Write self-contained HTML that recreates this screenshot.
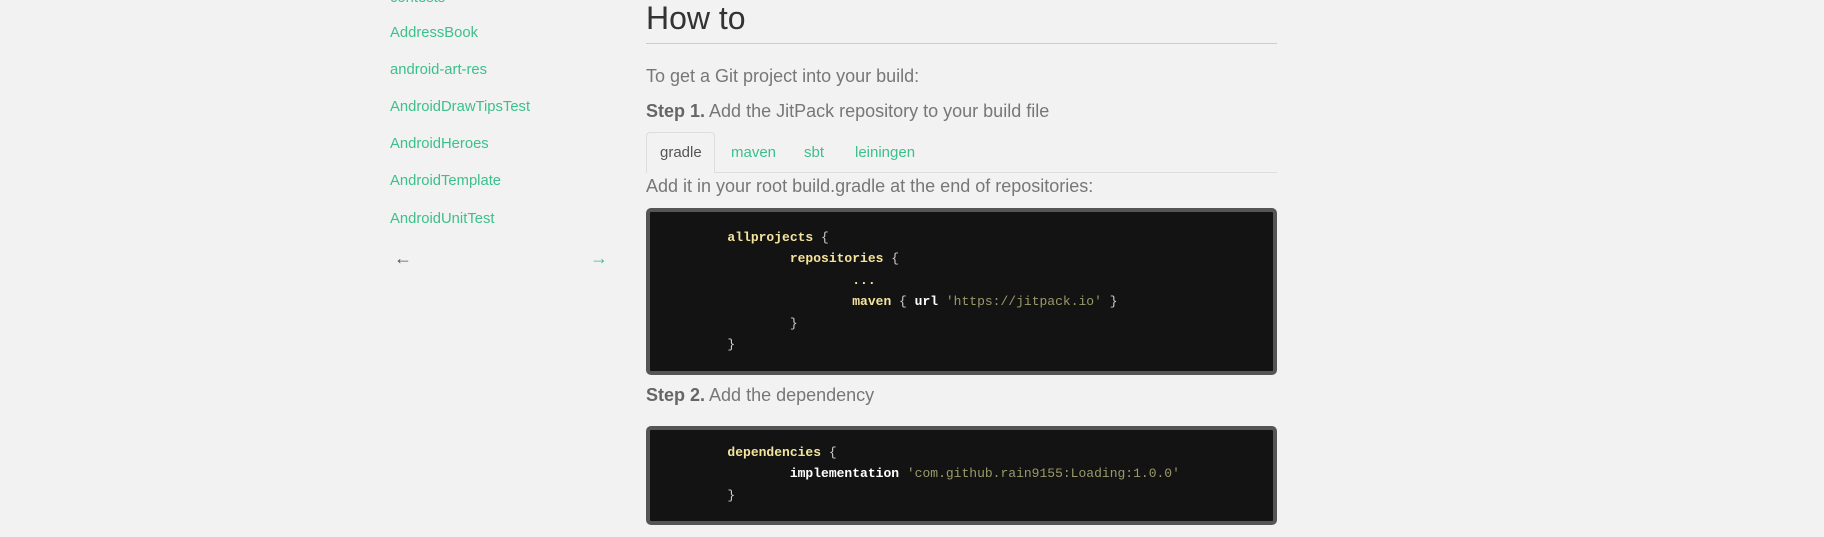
<!DOCTYPE html>
<html><head><meta charset="utf-8"><style>
*{margin:0;padding:0;box-sizing:border-box}
body{width:1824px;height:537px;background:#f2f2f2;font-family:"Liberation Sans",Arial,sans-serif;position:relative;overflow:hidden}
.a{position:absolute;white-space:nowrap}
.l{color:#3cc08c;font-size:14.8px;left:390px}
.t{color:#777;font-size:18px;left:646px}
.t b{color:#666}
pre{position:absolute;left:646px;width:631px;background:#131313;border:4px solid #555;border-radius:5px;font-family:"Liberation Mono","DejaVu Sans Mono",monospace;font-size:13px;line-height:21.6px;color:#ccc;padding-left:15px;tab-size:8;-moz-tab-size:8}
.k{color:#f5e49c;font-weight:bold}
.w{color:#fff;font-weight:bold}
.s{color:#9a9a6a}
</style></head><body>
<div class="a l" style="top:-10px">contests</div>
<div class="a l" style="top:25px">AddressBook</div>
<div class="a l" style="top:62px">android-art-res</div>
<div class="a l" style="top:99px">AndroidDrawTipsTest</div>
<div class="a l" style="top:136px">AndroidHeroes</div>
<div class="a l" style="top:173px">AndroidTemplate</div>
<div class="a l" style="top:211px">AndroidUnitTest</div>
<div class="a" style="left:394px;top:248px;font-size:18px;color:#555">←</div>
<div class="a" style="left:590px;top:248px;font-size:18px;color:#3cc08c">→</div>

<div class="a" style="left:646px;top:0px;font-size:32px;color:#333">How to</div>
<div class="a" style="left:646px;top:43px;width:631px;height:1px;background:#ccc"></div>
<div class="a t" style="top:66px">To get a Git project into your build:</div>
<div class="a t" style="top:101px"><b>Step 1.</b> Add the JitPack repository to your build file</div>

<div class="a" style="left:646px;top:172px;width:631px;height:1px;background:#ddd"></div>
<div class="a" style="left:646px;top:132px;width:69px;height:41px;border:1px solid #ddd;border-bottom:none;border-radius:4px 4px 0 0;background:#f2f2f2"></div>
<div class="a" style="left:660px;top:144px;font-size:15px;color:#555">gradle</div>
<div class="a" style="left:731px;top:144px;font-size:15px;color:#3cc08c">maven</div>
<div class="a" style="left:804px;top:144px;font-size:15px;color:#3cc08c">sbt</div>
<div class="a" style="left:855px;top:144px;font-size:15px;color:#3cc08c">leiningen</div>
<div class="a t" style="top:176px">Add it in your root build.gradle at the end of repositories:</div>

<pre style="top:208px;height:167px;padding-top:14.5px">	<span class="k">allprojects</span> {
		<span class="k">repositories</span> {
			<span class="k">...</span>
			<span class="k">maven</span> { <span class="w">url</span> <span class="s">'https://jitpack.io'</span> }
		}
	}</pre>

<div class="a t" style="top:385px"><b>Step 2.</b> Add the dependency</div>

<pre style="top:426px;height:99px;padding-top:11.5px">	<span class="k">dependencies</span> {
		<span class="w">implementation</span> <span class="s">'com.github.rain9155:Loading:1.0.0'</span>
	}</pre>
</body></html>
